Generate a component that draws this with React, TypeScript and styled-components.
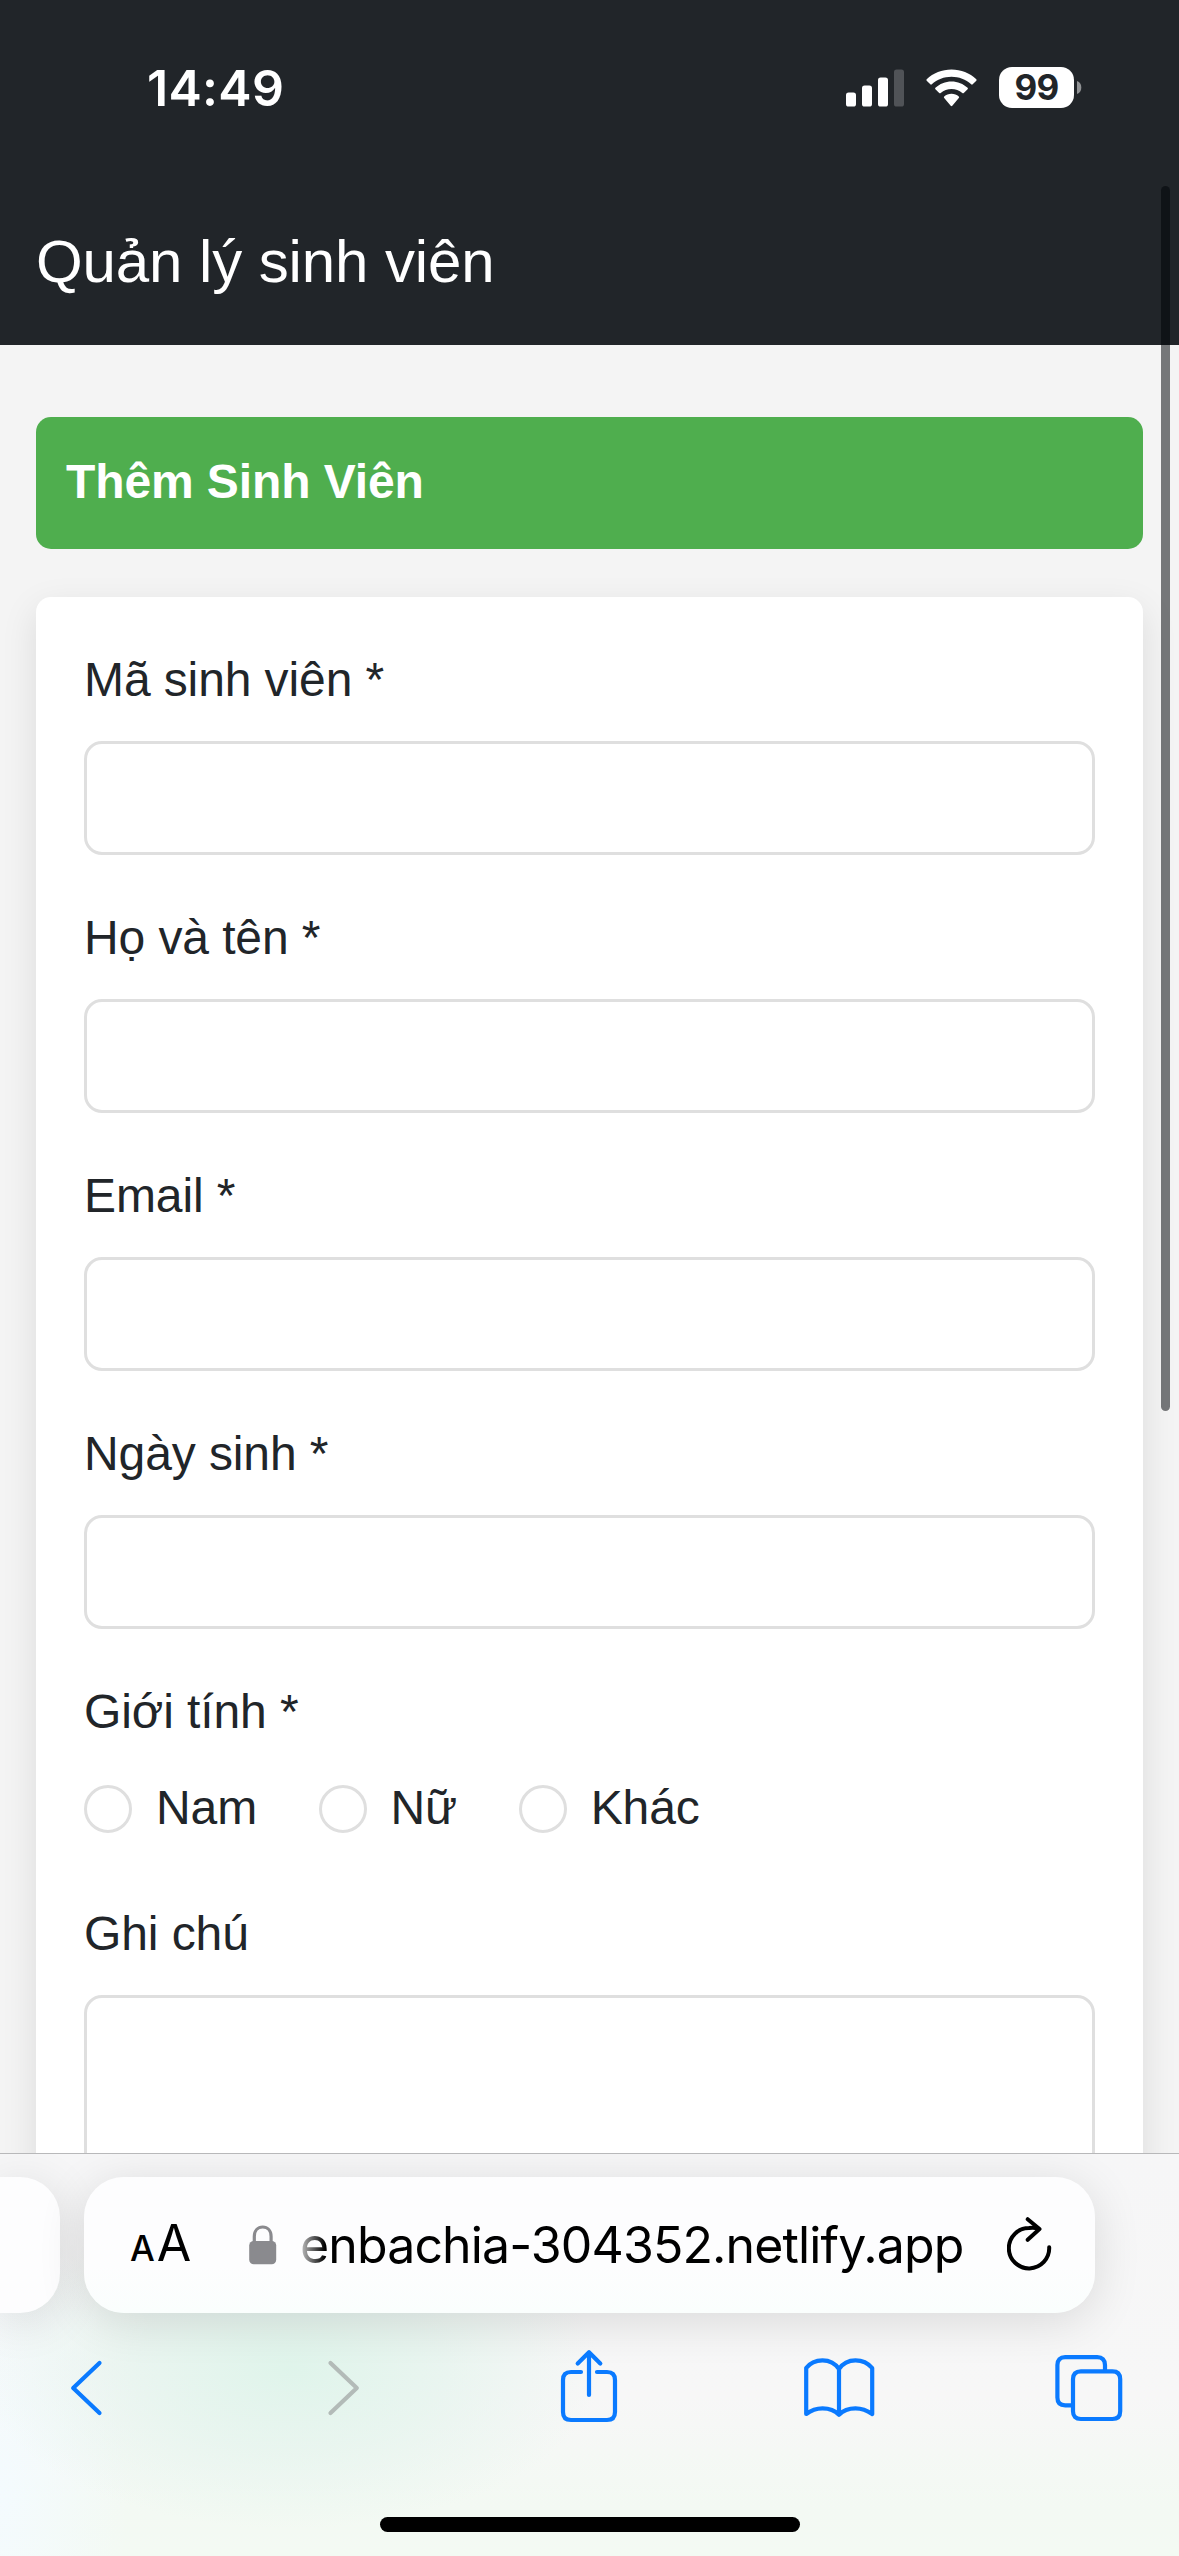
import React from "react";
import styled, { createGlobalStyle, css } from "styled-components";

const GlobalStyle = createGlobalStyle`
  *, *::before, *::after { box-sizing: border-box; }
  html, body { margin: 0; padding: 0; }
  body { background: #f4f4f4; overflow: hidden; }
`;

const web = '"Liberation Sans", Arial, sans-serif';
const system = 'Inter, "Liberation Sans", sans-serif';

const Screen = styled.div`
  position: relative;
  display: flex;
  flex-direction: column;
  width: 1179px;
  height: 2556px;
  overflow: hidden;
  background: #f4f4f4;
  color: #212529;
  font-family: ${web};
`;

const StatusBar = styled.div`
  display: flex;
  flex: none;
  align-items: center;
  justify-content: space-between;
  height: 177px;
  padding: 0 97px 2px 147px;
  background: #212529;
  color: #fff;
  font-family: ${system};
`;

const Clock = styled.span`
  font-size: 50px;
  font-weight: 600;
  line-height: 60px;
  letter-spacing: 0.3px;
`;

const StatusIcons = styled.div`
  display: flex;
  align-items: center;
  gap: 22px;
`;

const Battery = styled.div`
  display: flex;
  align-items: center;
  gap: 3px;
`;

const BatteryLevel = styled.span`
  display: flex;
  align-items: center;
  justify-content: center;
  width: 75px;
  height: 41px;
  border-radius: 13px;
  background: #fff;
  color: #212529;
  font-size: 35px;
  font-weight: 700;
  line-height: 41px;
  letter-spacing: -0.8px;
`;

const AppHeader = styled.header`
  display: flex;
  flex: none;
  align-items: center;
  height: 168px;
  padding: 2px 36px 0;
  background: #212529;
  color: #fff;
`;

const AppTitle = styled.h1`
  margin: 0;
  font-size: 60px;
  font-weight: 400;
  line-height: 90px;
  letter-spacing: -0.1px;
`;

const Content = styled.main`
  flex: 1;
  min-height: 0;
  overflow: hidden;
  padding: 72px 36px 0;
`;

const Banner = styled.h2`
  display: flex;
  align-items: center;
  height: 132px;
  margin: 0 0 48px;
  padding: 0 30px 3px;
  border-radius: 15px;
  background: #4fae4e;
  color: #fff;
  font-size: 48px;
  font-weight: 700;
  line-height: 72px;
  letter-spacing: -0.1px;
`;

const Card = styled.form`
  display: flex;
  flex-direction: column;
  gap: 48px;
  height: 1900px;
  padding: 48px;
  border-radius: 15px;
  background: #fff;
  box-shadow: 0 12px 36px rgba(0, 0, 0, 0.1);
`;

const Field = styled.div<{ $extra?: number }>`
  display: flex;
  flex-direction: column;
  gap: 24px;
  padding-bottom: ${(p) => p.$extra ?? 0}px;
`;

const Label = styled.label`
  height: 72px;
  font-size: 48px;
  line-height: 70px;
  letter-spacing: -0.1px;
`;

const control = css`
  display: block;
  width: 100%;
  margin: 0;
  padding: 18px 36px;
  border: 3px solid #dfdfdf;
  border-radius: 18px;
  outline: 0;
  background: #fff;
  color: inherit;
  font: 48px ${web};
`;

const Input = styled.input`
  ${control}
  height: 114px;
`;

const TextArea = styled.textarea`
  ${control}
  height: 258px;
  resize: none;
`;

const Options = styled.div`
  display: flex;
  gap: 61.5px;
`;

const Option = styled.label`
  display: flex;
  align-items: center;
  gap: 24px;
  height: 72px;
  font-size: 48px;
  line-height: 70px;
  letter-spacing: -0.1px;

  span { height: 72px; }
`;

const Radio = styled.input.attrs({ type: "radio" })`
  flex: none;
  appearance: none;
  width: 48px;
  height: 48px;
  margin: 0;
  border: 3px solid #dfdfdf;
  border-radius: 50%;
  background: #fff;
`;

const ScrollThumb = styled.div`
  position: absolute;
  top: 186px;
  right: 9px;
  width: 9px;
  height: 1225px;
  border-radius: 5px;
  background: rgba(0, 4, 8, 0.52);
`;

const BrowserBar = styled.footer`
  display: flex;
  flex: none;
  flex-direction: column;
  height: 403px;
  overflow: hidden;
  border-top: 1px solid #b8b8ba;
  font-family: ${system};
  background:
    radial-gradient(ellipse 310px 160px at 290px 215px, rgba(222, 244, 234, 0.95), rgba(226, 244, 236, 0.65) 50%, rgba(236, 247, 241, 0) 100%),
    radial-gradient(ellipse 130px 300px at 0 340px, rgba(244, 251, 254, 1), rgba(244, 251, 254, 0)),
    linear-gradient(180deg, #f6f6f7 0%, #f7f7f7 60%, #f3f9f3 88%, #f3faf3 100%);
`;

const TabStrip = styled.div`
  display: flex;
  flex: none;
  gap: 24px;
  padding: 23px 84px 0 0;
`;

const pill = css`
  height: 136px;
  background: #fdfdfe;
  box-shadow: 0 8px 48px rgba(0, 0, 0, 0.12);
`;

const PreviousTab = styled.div`
  ${pill}
  flex: none;
  width: 60px;
  border-radius: 0 40px 40px 0;
`;

const AddressBar = styled.div`
  ${pill}
  display: flex;
  flex: 1;
  align-items: center;
  padding: 0 43px 0 46px;
  border-radius: 40px;
  color: #000;
  background: linear-gradient(#fdfdfe 65%, #fafefd);
`;

const TextSize = styled.span`
  display: flex;
  align-items: baseline;
  gap: 2px;
  width: 119px;
  font-size: 50px;
  font-weight: 400;
  line-height: 60px;

  small {
    font-size: 35px;
    font-weight: 500;
  }
`;

const Address = styled.span`
  flex: 1;
  margin-left: 20px;
  padding-left: 3px;
  color: #000;
  font-size: 50px;
  line-height: 62px;
  letter-spacing: -0.87px;
  white-space: nowrap;
  mask-image: linear-gradient(90deg, rgba(0, 0, 0, 0.25) 4px, #000 28px);
`;

const Toolbar = styled.nav`
  display: flex;
  flex: none;
  justify-content: space-between;
  margin-top: 32px;
  padding: 0 50px 0 49px;
`;

const ToolButton = styled.button<{ $disabled?: boolean }>`
  display: block;
  width: 80px;
  height: 80px;
  padding: 0;
  border: 0;
  background: none;
  color: ${(p) => (p.$disabled ? "#b3bbb8" : "#0a7aff")};

  svg {
    display: block;
    fill: none;
    stroke: currentColor;
    stroke-width: 4.2;
    stroke-linecap: round;
    stroke-linejoin: round;
  }
`;

const HomeIndicator = styled.div`
  flex: none;
  align-self: center;
  width: 420px;
  height: 15px;
  margin-top: 92px;
  border-radius: 8px;
  background: #000;
`;

const Signal = () => (
  <svg width="58" height="38" viewBox="0 0 58 38" fill="#fff">
    <rect x="0" y="23.5" width="10" height="14" rx="2.6" />
    <rect x="16" y="16.5" width="10" height="21" rx="2.6" />
    <rect x="32" y="8.5" width="10" height="29" rx="2.6" />
    <rect x="48" y="0.5" width="10" height="37" rx="2.6" fill="#505357" />
  </svg>
);

const Wifi = () => (
  <svg width="51" height="38" viewBox="0 0 51 38" fill="#fff">
    <path d="M25.500.500C35 .500 43.800 4 50.300 10.200Q51 11 50.300 11.700L46.700 15.300Q46 16 45.200 15.300C39.800 10.400 32.900 7.700 25.500 7.700S11.200 10.400 5.800 15.300Q5 16 4.300 15.300L.700 11.700Q0 11 .700 10.200C7.200 4 16 .500 25.500.500Z" />
    <path d="M25.500 12.500C31.600 12.500 37.300 14.800 41.600 18.800Q42.300 19.500 41.600 20.300L37.800 24Q37 24.700 36.300 24C33.300 21.300 29.500 19.900 25.500 19.900S17.700 21.300 14.700 24Q14 24.700 13.200 24L9.400 20.300Q8.700 19.500 9.400 18.800C13.700 14.800 19.400 12.500 25.500 12.500Z" />
    <path d="M25.500 24.800C28.300 24.800 30.800 25.800 32.800 27.500Q33.500 28.200 32.800 29L26.300 36.800Q25.500 37.500 24.700 36.800L18.200 29Q17.500 28.200 18.200 27.500C20.200 25.800 22.700 24.800 25.500 24.800Z" />
  </svg>
);

const BatteryTip = () => (
  <svg width="5" height="13" viewBox="0 0 5 13">
    <path d="M0 0C3 1 4.300 3.500 4.300 6.500S3 12 0 13Z" fill="#909294" />
  </svg>
);

const Lock = () => (
  <svg width="28" height="40" viewBox="0 0 28 40">
    <path d="M5.300 19V11.500C5.300 5.500 9 2 13.700 2S22.100 5.500 22.100 11.500V19" fill="none" stroke="#8a8a8e" strokeWidth="3.200" />
    <rect x="0.200" y="16" width="27" height="23.200" rx="4.500" fill="#8a8a8e" />
  </svg>
);

const Reload = () => (
  <svg width="45" height="56" viewBox="0 0 45 56" fill="none" stroke="#000" strokeWidth="4" strokeLinecap="round" strokeLinejoin="round">
    <path d="M42.200 30.300A20.200 20.200 0 1 1 22 11C25.500 10.500 28.500 10.700 31 11.500" />
    <path d="M20.700 2.200L32.500 12L20.700 22.800" />
  </svg>
);

const toolIcons = [
  { name: "Back", paths: ["M50.500 18L24.200 43L50.500 68"] },
  { name: "Forward", disabled: true, paths: ["M31.500 18L57.800 43L31.500 68"] },
  {
    name: "Share",
    paths: [
      "M32 27H22Q14 27 14 35V67Q14 75 22 75H58Q66 75 66 67V35Q66 27 58 27H48",
      "M40 50V7.500M28.700 18.500L40 7.200L51.300 18.500",
    ],
  },
  {
    name: "Bookmarks",
    paths: [
      "M40 24C36 18 30 15.300 23.500 15.300C17 15.300 11 18 7.200 23V69C12 65.300 17 63.300 23.500 63.300C30 63.300 36 65.500 40 69.700C44 65.500 50 63.300 56.500 63.300C63 63.300 68 65.300 73.200 69V23C69 18 63 15.300 56.500 15.300C50 15.300 44 18 40 24V69",
    ],
  },
  {
    name: "Tabs",
    paths: [
      "M56 26V20Q56 12.200 48.200 12.200H16.200Q8.400 12.200 8.400 20V52.500Q8.400 60.300 16.200 60.300H24",
      "M31.800 26.300H63.400Q71.200 26.300 71.200 34.100V66.200Q71.200 74 63.400 74H31.800Q24 74 24 66.200V34.100Q24 26.300 31.800 26.300Z",
    ],
  },
];

const textFields = [
  { id: "code", label: "Mã sinh viên *" },
  { id: "name", label: "Họ và tên *" },
  { id: "email", label: "Email *" },
  { id: "birthday", label: "Ngày sinh *" },
];

const genders = ["Nam", "Nữ", "Khác"];

export default function App() {
  return (
    <>
      <GlobalStyle />
      <Screen>
        <StatusBar>
          <Clock>14:49</Clock>
          <StatusIcons>
            <Signal />
            <Wifi />
            <Battery>
              <BatteryLevel>99</BatteryLevel>
              <BatteryTip />
            </Battery>
          </StatusIcons>
        </StatusBar>
        <AppHeader>
          <AppTitle>Quản lý sinh viên</AppTitle>
        </AppHeader>
        <Content>
          <Banner>Thêm Sinh Viên</Banner>
          <Card>
            {textFields.map((f) => (
              <Field key={f.id}>
                <Label htmlFor={f.id}>{f.label}</Label>
                <Input id={f.id} />
              </Field>
            ))}
            <Field $extra={6}>
              <Label as="span">Giới tính *</Label>
              <Options>
                {genders.map((g) => (
                  <Option key={g}>
                    <Radio name="gender" />
                    <span>{g}</span>
                  </Option>
                ))}
              </Options>
            </Field>
            <Field>
              <Label htmlFor="note">Ghi chú</Label>
              <TextArea id="note" />
            </Field>
          </Card>
        </Content>
        <BrowserBar>
          <TabStrip>
            <PreviousTab />
            <AddressBar>
              <TextSize>
                <small>A</small>A
              </TextSize>
              <Lock />
              <Address>enbachia-304352.netlify.app</Address>
              <Reload />
            </AddressBar>
          </TabStrip>
          <Toolbar>
            {toolIcons.map((icon) => (
              <ToolButton key={icon.name} $disabled={icon.disabled}>
                <svg width="80" height="80" viewBox="0 0 80 80">
                  {icon.paths.map((d) => (
                    <path key={d} d={d} />
                  ))}
                </svg>
              </ToolButton>
            ))}
          </Toolbar>
          <HomeIndicator />
        </BrowserBar>
        <ScrollThumb />
      </Screen>
    </>
  );
}
